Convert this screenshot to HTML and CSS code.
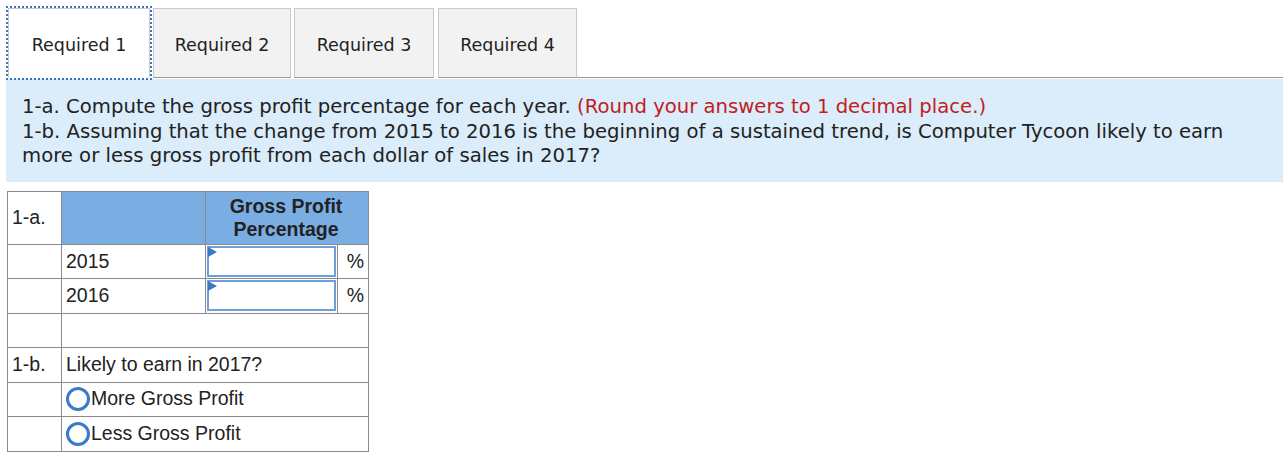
FILE: index.html
```html
<!DOCTYPE html>
<html>
<head>
<meta charset="utf-8">
<link rel="stylesheet" href="styles.css">
</head>
<body>
<div class="page">
  <div class="tabs">
    <div class="tab active t1">Required 1</div>
    <div class="tab t2">Required 2</div>
    <div class="tab t3">Required 3</div>
    <div class="tab t4">Required 4</div>
    <div class="tab-fill"></div>
  </div>
  <div class="question">
    <div>1-a. Compute the gross profit percentage for each year. <span class="hint">(Round your answers to 1 decimal place.)</span></div>
    <div>1-b. Assuming that the change from 2015 to 2016 is the beginning of a sustained trend, is Computer Tycoon likely to earn more or less gross profit from each dollar of sales in 2017?</div>
  </div>
  <table class="grid">
    <colgroup>
      <col class="k1"><col class="k2"><col class="k3"><col class="k4">
    </colgroup>
    <tr class="head">
      <td class="label">1-a.</td>
      <td class="blue"></td>
      <td class="blue hd" colspan="2">Gross Profit<br>Percentage</td>
    </tr>
    <tr class="row">
      <td></td>
      <td>2015</td>
      <td class="inp"><div class="box"></div></td>
      <td class="pct">%</td>
    </tr>
    <tr class="row">
      <td></td>
      <td>2016</td>
      <td class="inp"><div class="box"></div></td>
      <td class="pct">%</td>
    </tr>
    <tr class="row">
      <td></td>
      <td colspan="3"></td>
    </tr>
    <tr class="row">
      <td>1-b.</td>
      <td colspan="3">Likely to earn in 2017?</td>
    </tr>
    <tr class="row">
      <td></td>
      <td class="opt" colspan="3"><span class="radio"></span>More Gross Profit</td>
    </tr>
    <tr class="row">
      <td></td>
      <td class="opt" colspan="3"><span class="radio"></span>Less Gross Profit</td>
    </tr>
  </table>
</div>
</body>
</html>
```
FILE: styles.css
```css
html, body { margin: 0; padding: 0; background: #fff; }
.page { padding: 8px 2px 0 6px; }
.tabs { display: flex; align-items: stretch; height: 70px; margin-left: 2px; }
.tab {
  font-family: "DejaVu Sans", Verdana, sans-serif;
  font-size: 17.5px;
  color: #222;
  background: #f2f2f2;
  border: 1px solid #c9c9c9;
  border-bottom: 1px solid #999;
  display: flex; align-items: center; justify-content: center;
  box-sizing: border-box;
  margin-right: 3px;
  padding-top: 3px;
}
.t1 { width: 142px; }
.t2 { width: 138px; }
.t3 { width: 140px; margin-right: 4px; }
.t4 { width: 139px; }
.tab.active {
  background: #fff;
  border-bottom: 1px solid #fff;
  outline: 2px dotted #3b74c4;
  outline-offset: 0px;
}
.tab-fill { flex: 1; border-bottom: 1px solid #999; margin-left: -3px; }
.question {
  background: #dbecfa;
  padding: 16px 16px 13px 16px;
  font-family: "DejaVu Sans", Verdana, sans-serif;
  font-size: 19.65px;
  line-height: 24.5px;
  color: #222;
  margin-top: 1px;
}
.hint { color: #c01e1e; }
.grid {
  margin: 9px 0 0 1px;
  border-collapse: collapse;
  table-layout: fixed;
  width: 361px;
  font-family: "Liberation Sans", Arial, sans-serif;
  font-size: 19.5px;
  color: #222;
}
.k1 { width: 54px; }
.k2 { width: 144px; }
.k3 { width: 132px; }
.k4 { width: 31px; }
.grid td { border: 1px solid #8a8a8a; padding: 0 4px; vertical-align: middle; white-space: nowrap; }
.head td { height: 52px; }
.row td { height: 33.5px; }
.pct { text-align: right; }
.blue { background: #7aaee3; }
.hd { font-weight: bold; text-align: center; line-height: 23px; padding-right: 6px !important; }
.grid td.inp { padding: 0 1px; }
.box {
  height: 31px;
  border: 2px solid #6f9fd9;
  box-sizing: border-box;
  background: #fff;
  position: relative;
}
.box::before {
  content: "";
  position: absolute; left: -1px; top: -1px;
  border-left: 9px solid #3a78c2;
  border-top: 5px solid transparent;
  border-bottom: 5px solid transparent;
  height: 0; width: 0;
}
.grid td.opt { padding-left: 4px; }
.radio {
  display: inline-block;
  width: 18px; height: 18px;
  border: 3px solid #3a7ac6;
  border-radius: 50%;
  vertical-align: -6px;
  margin-right: 1px;
}
```
